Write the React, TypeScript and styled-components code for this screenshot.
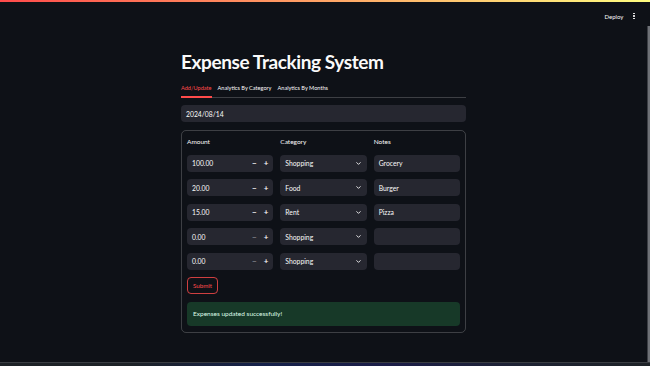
import React from "react";
import styled, { createGlobalStyle } from "styled-components";

const GlobalStyle = createGlobalStyle`
  html, body { margin: 0; padding: 0; background: #0e1117; }
  body { font-family: "Source Sans Pro", Lato, "Open Sans", sans-serif; color: #fafafa; }
  * { box-sizing: border-box; }
`;

const Page = styled.div`
  width: 650px;
  height: 366px;
  display: flex;
  flex-direction: column;
  overflow: hidden;
  background: #0e1117;
`;

const Decoration = styled.div`
  height: 2px;
  flex: none;
  background: linear-gradient(90deg, #ff4b4b, #fffd80);
`;

const Body = styled.div`
  flex: 1;
  display: grid;
  grid-template-columns: 1fr 3px;
  min-height: 0;
`;

const MainCol = styled.div`
  display: flex;
  flex-direction: column;
`;

const Header = styled.header`
  height: 28px;
  display: flex;
  justify-content: flex-end;
  align-items: center;
  gap: 10px;
  padding-right: 12px;
`;

const Deploy = styled.span`
  font-size: 6px;
  color: #fafafa;
`;

const Kebab = styled.span`
  display: flex;
  flex-direction: column;
  gap: 1px;
  & > i {
    display: block;
    width: 1.6px;
    height: 1.6px;
    border-radius: 50%;
    background: #fafafa;
  }
`;

const Content = styled.main`
  width: 285px;
  margin: 0 auto;
  padding-top: 19px;
  display: flex;
  flex-direction: column;
`;

const Title = styled.h1`
  margin: 0;
  font-size: 19px;
  font-weight: 700;
  line-height: 26px;
  letter-spacing: -0.4px;
  color: #fafafa;
`;

const Tabs = styled.div`
  margin-top: 8px;
  display: flex;
  gap: 6px;
  border-bottom: 1px solid rgba(250, 250, 250, 0.2);
`;

const Tab = styled.span<{ $active?: boolean }>`
  font-size: 5.6px;
  line-height: 8px;
  padding: 1px 0 4px;
  color: ${(p) => (p.$active ? "#ff4b4b" : "#fafafa")};
  border-bottom: 2px solid ${(p) => (p.$active ? "#ff4b4b" : "transparent")};
  margin-bottom: -1px;
  white-space: nowrap;
`;

const Field = styled.div`
  height: 17px;
  background: #262730;
  border-radius: 4px;
  display: flex;
  align-items: center;
  padding: 0 5px;
  font-size: 6.8px;
  color: #fafafa;
`;

const DateField = styled(Field)`
  margin-top: 7px;
`;

const Form = styled.div`
  margin-top: 8px;
  border: 1px solid rgba(250, 250, 250, 0.2);
  border-radius: 5px;
  padding: 7px 5px 6px;
  display: flex;
  flex-direction: column;
`;

const Grid = styled.div`
  display: grid;
  grid-template-columns: 1fr 1fr 1fr;
  column-gap: 7px;
  row-gap: 7.5px;
`;

const Label = styled.div`
  font-size: 6.5px;
  line-height: 8px;
  height: 9px;
  color: #fafafa;
`;

const Steppers = styled.span`
  margin-left: auto;
  display: flex;
  gap: 7px;
  font-size: 8px;
  line-height: 1;
`;

const Step = styled.span<{ $dim?: boolean }>`
  color: ${(p) => (p.$dim ? "rgba(250,250,250,0.45)" : "#fafafa")};
  font-weight: 700;
`;

const Chevron = styled.svg`
  margin-left: auto;
  width: 7px;
  height: 7px;
`;

const SubmitButton = styled.button`
  align-self: flex-start;
  margin-top: 7px;
  height: 17px;
  padding: 0 5px;
  background: transparent;
  border: 1px solid rgba(255, 75, 75, 0.8);
  border-radius: 4px;
  color: #ff4b4b;
  font-family: inherit;
  font-size: 6.2px;
`;

const Alert = styled.div`
  margin-top: 8px;
  height: 24px;
  border-radius: 4px;
  background: #173928;
  color: #dffde9;
  font-size: 6.5px;
  display: flex;
  align-items: center;
  padding: 0 6px;
`;

const ScrollCol = styled.div`
  display: flex;
  flex-direction: column;
  padding-top: 24px;
`;

const Thumb = styled.div`
  flex: 1;
  background: #6e7177;
  border-left: 1px solid #3c3f45;
`;

const Taskbar = styled.div`
  height: 4px;
  flex: none;
  border-top: 1px solid #3a3d42;
  background: linear-gradient(90deg, #1d2227 0%, #1d2227 20%, #15214a 40%, #1b1d47 60%, #1d2233 80%, #1d2227 100%);
`;

type Row = { amount: string; category: string; notes: string };

const rows: Row[] = [
  { amount: "100.00", category: "Shopping", notes: "Grocery" },
  { amount: "20.00", category: "Food", notes: "Burger" },
  { amount: "15.00", category: "Rent", notes: "Pizza" },
  { amount: "0.00", category: "Shopping", notes: "" },
  { amount: "0.00", category: "Shopping", notes: "" },
];

const ChevronIcon = () => (
  <Chevron viewBox="0 0 24 24" fill="none" stroke="#fafafa" strokeWidth={3} strokeLinecap="round" strokeLinejoin="round">
    <path d="M6 9l6 6 6-6" />
  </Chevron>
);

export default function App() {
  return (
    <>
      <GlobalStyle />
      <Page>
        <Decoration />
        <Body>
          <MainCol>
            <Header>
              <Deploy>Deploy</Deploy>
              <Kebab>
                <i />
                <i />
                <i />
              </Kebab>
            </Header>
            <Content>
              <Title>Expense Tracking System</Title>
              <Tabs>
                <Tab $active>Add/Update</Tab>
                <Tab>Analytics By Category</Tab>
                <Tab>Analytics By Months</Tab>
              </Tabs>
              <DateField>2024/08/14</DateField>
              <Form>
                <Grid>
                  <Label>Amount</Label>
                  <Label>Category</Label>
                  <Label>Notes</Label>
                  {rows.map((r, i) => (
                    <React.Fragment key={i}>
                      <Field>
                        {r.amount}
                        <Steppers>
                          <Step $dim={r.amount === "0.00"}>−</Step>
                          <Step>+</Step>
                        </Steppers>
                      </Field>
                      <Field>
                        {r.category}
                        <ChevronIcon />
                      </Field>
                      <Field>{r.notes}</Field>
                    </React.Fragment>
                  ))}
                </Grid>
                <SubmitButton>Submit</SubmitButton>
                <Alert>Expenses updated successfully!</Alert>
              </Form>
            </Content>
          </MainCol>
          <ScrollCol>
            <Thumb />
          </ScrollCol>
        </Body>
        <Taskbar />
      </Page>
    </>
  );
}
